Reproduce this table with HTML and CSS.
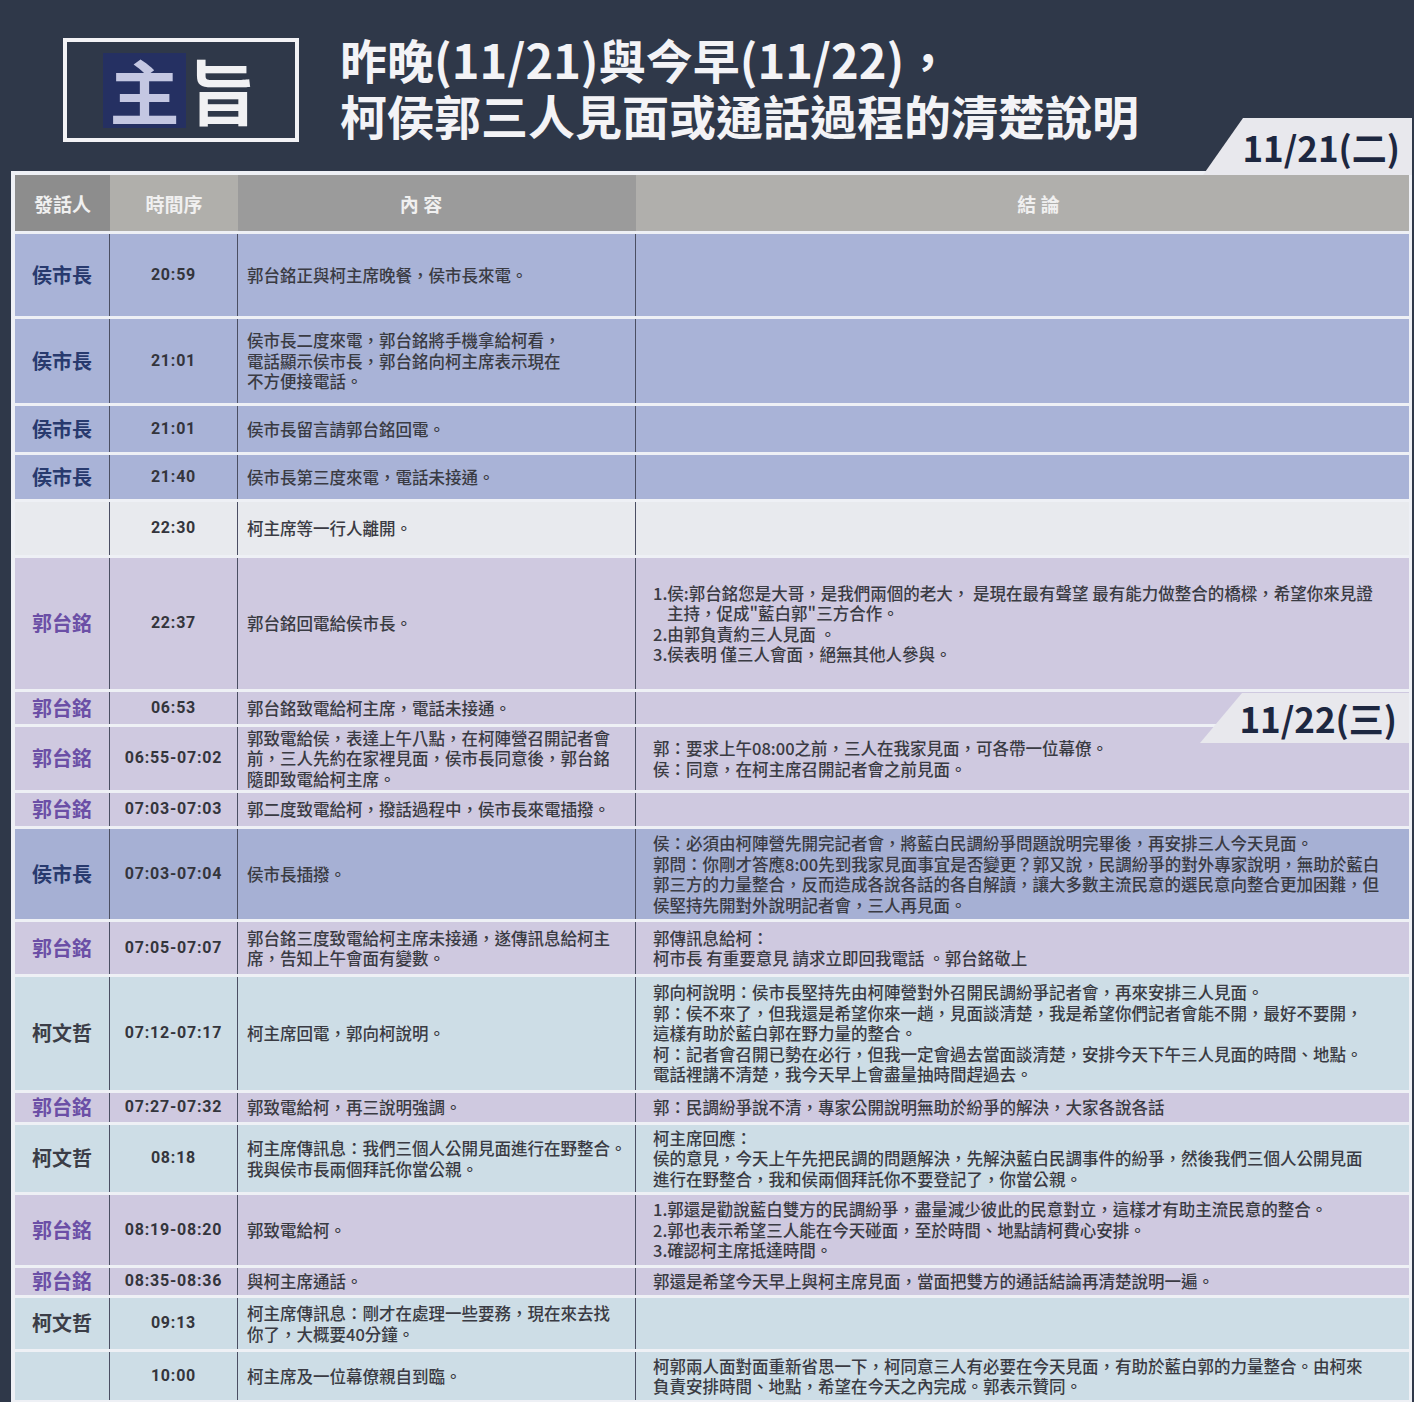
FILE: index.html
```html
<!DOCTYPE html>
<html lang="zh-Hant">
<head>
<meta charset="utf-8">
<title>柯侯郭三人見面或通話過程</title>
<link rel="stylesheet" href="styles.css">
</head>
<body>
<div class="page">
  <header class="top">
    <div class="badge"><span class="zhu">主</span><span class="zhi">旨</span></div>
    <h1 class="title"><span class="tline">昨晚(11/21)與今早(11/22)，</span><span class="tline">柯侯郭三人見面或通話過程的清楚說明</span></h1>
    <div class="date-tab date-1">11/21(二)</div>
  </header>

  <div class="table">
    <div class="rows">
      <div class="row head">
        <div class="hc hc1">發話人</div>
        <div class="hc hc2">時間序</div>
        <div class="hc hc3">內 容</div>
        <div class="hc hc4">結 論</div>
      </div>

      <div class="row blue">
        <div class="cell name hou">侯市長</div>
        <div class="cell time">20:59</div>
        <div class="cell text">郭台銘正與柯主席晚餐，侯市長來電。</div>
        <div class="cell conc"></div>
      </div>

      <div class="row blue">
        <div class="cell name hou">侯市長</div>
        <div class="cell time">21:01</div>
        <div class="cell text">侯市長二度來電，郭台銘將手機拿給柯看，<br>電話顯示侯市長，郭台銘向柯主席表示現在<br>不方便接電話。</div>
        <div class="cell conc"></div>
      </div>

      <div class="row blue">
        <div class="cell name hou">侯市長</div>
        <div class="cell time">21:01</div>
        <div class="cell text">侯市長留言請郭台銘回電。</div>
        <div class="cell conc"></div>
      </div>

      <div class="row blue">
        <div class="cell name hou">侯市長</div>
        <div class="cell time">21:40</div>
        <div class="cell text">侯市長第三度來電，電話未接通。</div>
        <div class="cell conc"></div>
      </div>

      <div class="row white">
        <div class="cell name"></div>
        <div class="cell time">22:30</div>
        <div class="cell text">柯主席等一行人離開。</div>
        <div class="cell conc"></div>
      </div>

      <div class="row purple">
        <div class="cell name guo">郭台銘</div>
        <div class="cell time">22:37</div>
        <div class="cell text">郭台銘回電給侯市長。</div>
        <div class="cell conc">1.侯:郭台銘您是大哥，是我們兩個的老大， 是現在最有聲望 最有能力做整合的橋樑，希望你來見證<br><span class="indent">主持，促成"藍白郭"三方合作。</span><br>2.由郭負責約三人見面 。<br>3.侯表明 僅三人會面，絕無其他人參與。</div>
      </div>

      <div class="row purple">
        <div class="cell name guo">郭台銘</div>
        <div class="cell time">06:53</div>
        <div class="cell text">郭台銘致電給柯主席，電話未接通。</div>
        <div class="cell conc"></div>
      </div>

      <div class="row purple">
        <div class="cell name guo">郭台銘</div>
        <div class="cell time">06:55-07:02</div>
        <div class="cell text">郭致電給侯，表達上午八點，在柯陣營召開記者會<br>前，三人先約在家裡見面，侯市長同意後，郭台銘<br>隨即致電給柯主席。</div>
        <div class="cell conc">郭：要求上午08:00之前，三人在我家見面，可各帶一位幕僚。<br>侯：同意，在柯主席召開記者會之前見面。</div>
      </div>

      <div class="row purple">
        <div class="cell name guo">郭台銘</div>
        <div class="cell time">07:03-07:03</div>
        <div class="cell text">郭二度致電給柯，撥話過程中，侯市長來電插撥。</div>
        <div class="cell conc"></div>
      </div>

      <div class="row blue2">
        <div class="cell name hou">侯市長</div>
        <div class="cell time">07:03-07:04</div>
        <div class="cell text">侯市長插撥。</div>
        <div class="cell conc">侯：必須由柯陣營先開完記者會，將藍白民調紛爭問題說明完畢後，再安排三人今天見面。<br>郭問：你剛才答應8:00先到我家見面事宜是否變更？郭又說，民調紛爭的對外專家說明，無助於藍白<br>郭三方的力量整合，反而造成各說各話的各自解讀，讓大多數主流民意的選民意向整合更加困難，但<br>侯堅持先開對外說明記者會，三人再見面。</div>
      </div>

      <div class="row purple">
        <div class="cell name guo">郭台銘</div>
        <div class="cell time">07:05-07:07</div>
        <div class="cell text">郭台銘三度致電給柯主席未接通，遂傳訊息給柯主<br>席，告知上午會面有變數。</div>
        <div class="cell conc">郭傳訊息給柯：<br>柯市長 有重要意見 請求立即回我電話 。郭台銘敬上</div>
      </div>

      <div class="row cyan">
        <div class="cell name ke">柯文哲</div>
        <div class="cell time">07:12-07:17</div>
        <div class="cell text">柯主席回電，郭向柯說明。</div>
        <div class="cell conc">郭向柯說明：侯市長堅持先由柯陣營對外召開民調紛爭記者會，再來安排三人見面。<br>郭：侯不來了，但我還是希望你來一趟，見面談清楚，我是希望你們記者會能不開，最好不要開，<br>這樣有助於藍白郭在野力量的整合。<br>柯：記者會召開已勢在必行，但我一定會過去當面談清楚，安排今天下午三人見面的時間、地點。<br>電話裡講不清楚，我今天早上會盡量抽時間趕過去。</div>
      </div>

      <div class="row purple">
        <div class="cell name guo">郭台銘</div>
        <div class="cell time">07:27-07:32</div>
        <div class="cell text">郭致電給柯，再三說明強調。</div>
        <div class="cell conc">郭：民調紛爭說不清，專家公開說明無助於紛爭的解決，大家各說各話</div>
      </div>

      <div class="row cyan">
        <div class="cell name ke">柯文哲</div>
        <div class="cell time">08:18</div>
        <div class="cell text">柯主席傳訊息：我們三個人公開見面進行在野整合。<br>我與侯市長兩個拜託你當公親。</div>
        <div class="cell conc">柯主席回應：<br>侯的意見，今天上午先把民調的問題解決，先解決藍白民調事件的紛爭，然後我們三個人公開見面<br>進行在野整合，我和侯兩個拜託你不要登記了，你當公親。</div>
      </div>

      <div class="row purple">
        <div class="cell name guo">郭台銘</div>
        <div class="cell time">08:19-08:20</div>
        <div class="cell text">郭致電給柯。</div>
        <div class="cell conc">1.郭還是勸說藍白雙方的民調紛爭，盡量減少彼此的民意對立，這樣才有助主流民意的整合。<br>2.郭也表示希望三人能在今天碰面，至於時間、地點請柯費心安排。<br>3.確認柯主席抵達時間。</div>
      </div>

      <div class="row purple">
        <div class="cell name guo">郭台銘</div>
        <div class="cell time">08:35-08:36</div>
        <div class="cell text">與柯主席通話。</div>
        <div class="cell conc">郭還是希望今天早上與柯主席見面，當面把雙方的通話結論再清楚說明一遍。</div>
      </div>

      <div class="row cyan">
        <div class="cell name ke">柯文哲</div>
        <div class="cell time">09:13</div>
        <div class="cell text">柯主席傳訊息：剛才在處理一些要務，現在來去找<br>你了，大概要40分鐘。</div>
        <div class="cell conc"></div>
      </div>

      <div class="row cyan">
        <div class="cell name"></div>
        <div class="cell time">10:00</div>
        <div class="cell text">柯主席及一位幕僚親自到臨。</div>
        <div class="cell conc">柯郭兩人面對面重新省思一下，柯同意三人有必要在今天見面，有助於藍白郭的力量整合。由柯來<br>負責安排時間、地點，希望在今天之內完成。郭表示贊同。</div>
      </div>
    </div>
    <div class="date-tab date-2">11/22(三)</div>
  </div>
</div>
</body>
</html>
```

FILE: styles.css
```css
html, body {
  margin: 0;
  padding: 0;
}

body {
  background: #2f3849;
  font-family: "Noto Sans CJK TC", "Noto Sans", sans-serif;
}

.page {
  position: relative;
  width: 1414px;
  height: 1402px;
  overflow: hidden;
}

/* ---------- top header ---------- */
.top {
  position: relative;
  height: 171px;
  box-sizing: border-box;
  padding: 38px 0 0 63px;
  display: flex;
  align-items: flex-start;
}

.badge {
  width: 236px;
  height: 104px;
  box-sizing: border-box;
  border: 4px solid #f2f2f5;
  display: flex;
  align-items: center;
  padding-left: 36px;
}

.zhu {
  width: 83px;
  height: 75px;
  background: #253062;
  color: #c4c7e2;
  font-size: 70px;
  font-weight: 700;
  line-height: 1;
  display: flex;
  align-items: center;
  justify-content: center;
}

.zhi {
  color: #f1f1f3;
  font-size: 70px;
  font-weight: 700;
  line-height: 1;
  margin-left: 2px;
}

.title {
  margin: -5px 0 0 41px;
  display: flex;
  flex-direction: column;
  gap: 5px;
  font-size: 47px;
  line-height: 51px;
  font-weight: 700;
  color: #f3f3f6;
}

.tline {
  display: block;
  height: 51px;
}

/* ---------- date tabs ---------- */
.date-tab {
  position: absolute;
  background: #e8e8ed;
  color: #1d2740;
  font-weight: 700;
  font-size: 35px;
  text-align: right;
  box-sizing: border-box;
  padding-right: 12px;
  z-index: 2;
}

.date-1 {
  left: 1203px;
  top: 118px;
  width: 209px;
  height: 57px;
  line-height: 57px;
  clip-path: polygon(40px 0, 100% 0, 100% 100%, 0 100%);
}

.date-2 {
  left: 1189px;
  top: 522px;
  width: 209px;
  height: 50px;
  line-height: 50px;
  clip-path: polygon(42px 0, 100% 0, 100% 100%, 0 100%);
}

/* ---------- table ---------- */
.table {
  position: relative;
  margin-left: 11px;
  width: 1401px;
  box-sizing: border-box;
  background: #eef0f5;
  padding: 4px 3px 2px 4px;
}

.rows {
  display: grid;
  row-gap: 3px;
  grid-template-rows: 56px 82px 84px 46px 44px 53px 131px 32px 63px 33px 90px 52px 113px 29px 67px 70px 27px 51px 48px;
}

.row {
  display: grid;
  grid-template-columns: 95px 128px 398px 1fr;
}

.hc {
  display: flex;
  align-items: center;
  justify-content: center;
  color: #f0f0f0;
  font-size: 19px;
  font-weight: 700;
}

.hc1 { background: #8d8d8d; }
.hc2 { background: #b0afab; }
.hc3 { background: #9b9b9b; padding-right: 32px; }
.hc4 { background: #b0afac; padding-left: 32px; }

.cell {
  display: flex;
  align-items: center;
  box-sizing: border-box;
  color: #3a3b43;
  font-size: 16.5px;
  font-weight: 500;
  line-height: 20.5px;
}

.cell.name,
.cell.time,
.cell.text {
  border-right: 1px solid #4b4f63;
}

.cell.name {
  justify-content: center;
  font-size: 20px;
  font-weight: 700;
}

.cell.time {
  justify-content: center;
  font-family: Roboto, "Noto Sans", sans-serif;
  font-weight: 700;
  font-size: 16px;
  letter-spacing: 0.8px;
  color: #34353c;
}

.cell.text {
  padding-left: 9px;
}

.cell.conc {
  padding-left: 17px;
  display: block;
  align-self: center;
}

.indent {
  padding-left: 14px;
}

.hou { color: #283a6e; }
.guo { color: #6b4fa6; }
.ke  { color: #3b3d47; }

.row.blue   { background: #a9b3d7; }
.row.blue2  { background: #a6b0d4; }
.row.white  { background: #e8eaee; }
.row.purple { background: #cfc9e0; }
.row.cyan   { background: #cddde6; }
```
